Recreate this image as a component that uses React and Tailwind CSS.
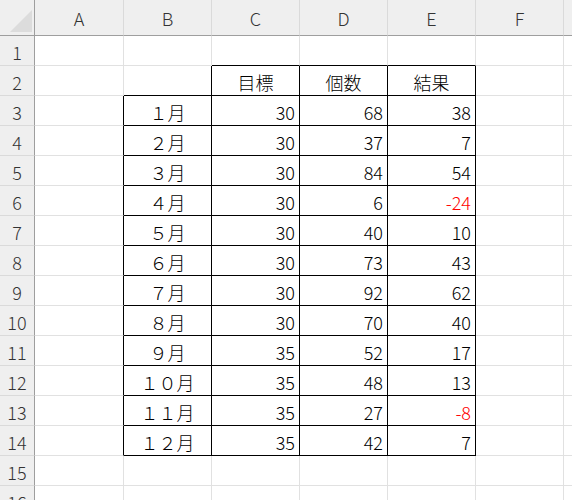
import React from "react";

// シートの見た目をそのまま再現（A〜G列、1〜16行）
const COLS = ["A", "B", "C", "D", "E", "F", ""];

const data = [
  ["１月", 30, 68, 38],
  ["２月", 30, 37, 7],
  ["３月", 30, 84, 54],
  ["４月", 30, 6, -24],
  ["５月", 30, 40, 10],
  ["６月", 30, 73, 43],
  ["７月", 30, 92, 62],
  ["８月", 30, 70, 40],
  ["９月", 35, 52, 17],
  ["１０月", 35, 48, 13],
  ["１１月", 35, 27, -8],
  ["１２月", 35, 42, 7],
];

// c: 0=A, 1=B ...
const inTable = (r, c) => {
  if (r === 2) return c >= 2 && c <= 4;
  if (r >= 3 && r <= 14) return c >= 1 && c <= 4;
  return false;
};

const cellContent = (r, c) => {
  if (r === 2) {
    const h = { 2: "目標", 3: "個数", 4: "結果" }[c];
    return h ? { text: h, align: "center" } : null;
  }
  if (r >= 3 && r <= 14) {
    const row = data[r - 3];
    if (c === 1) return { text: row[0], align: "center" };
    if (c >= 2 && c <= 4) {
      const v = row[c - 1];
      return { text: String(v), align: "right", red: v < 0 };
    }
  }
  return null;
};

const Cell = ({ r, c }) => {
  const right = inTable(r, c) || inTable(r, c + 1);
  const bottom = inTable(r, c) || inTable(r + 1, c);
  const content = cellContent(r, c);
  return (
    <div
      className={`box-border border-r border-b flex items-center pt-[2px] ${
        right ? "border-r-black" : "border-r-[#e1e1e1]"
      } ${bottom ? "border-b-black" : "border-b-[#e1e1e1]"} ${
        content?.align === "right" ? "justify-end pr-[4px]" : "justify-center"
      } ${content?.red ? "text-[#ff0000]" : "text-black"}`}
    >
      {content?.text}
    </div>
  );
};

export default function App() {
  const rows = Array.from({ length: 16 }, (_, i) => i + 1);

  return (
    <div
      className="w-[572px] h-[500px] overflow-hidden bg-white text-[18px] leading-none font-light"
      style={{ fontFamily: '"Noto Sans CJK JP", "Noto Sans", sans-serif' }}
    >
      <div className="grid grid-cols-[35px_89px_88px_88px_88px_88px_88px_88px] grid-rows-[36px_repeat(16,30px)] w-max">
        {/* 左上の角 */}
        <div className="relative box-border bg-[#efefef] border-r border-b border-r-[#9e9e9e] border-b-[#9e9e9e]">
          <svg className="absolute left-[10px] top-[10px]" width="22" height="22" viewBox="0 0 22 22">
            <polygon points="22,0 22,22 0,22" fill="#dcdcdc" />
          </svg>
        </div>
        {COLS.map((col, i) => (
          <div
            key={i}
            className="box-border bg-[#efefef] border-b border-b-[#9e9e9e] border-r border-r-[#dadada] flex items-center justify-center text-[#333] text-[18px] pt-[1px]"
          >
            {col}
          </div>
        ))}

        {rows.map((r) => (
          <React.Fragment key={r}>
            <div className="box-border bg-[#efefef] border-r border-r-[#9e9e9e] border-b border-b-[#dadada] flex items-center justify-center text-[#333] text-[18px] pt-[2px]">
              {r}
            </div>
            {COLS.map((col, c) => (
              <Cell key={c} r={r} c={c} />
            ))}
          </React.Fragment>
        ))}
      </div>
    </div>
  );
}
